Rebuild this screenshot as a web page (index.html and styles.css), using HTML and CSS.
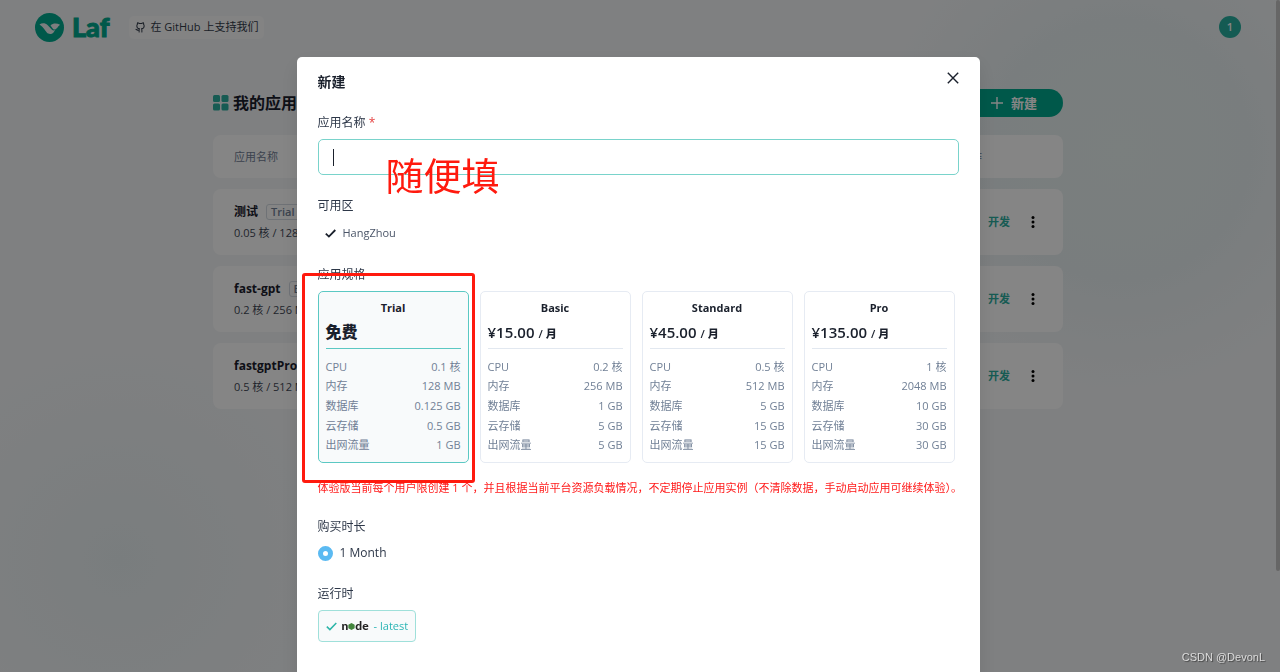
FILE: index.html
```
<!DOCTYPE html>
<html lang="zh-CN">
<head>
<meta charset="utf-8">
<meta name="viewport" content="width=device-width, initial-scale=1">
<title>Laf</title>
<link rel="stylesheet" href="styles.css">
</head>
<body>
<div class="page">
  <header class="topbar">
    <a class="logo" href="#" aria-label="Laf">
      <svg width="29" height="29" viewBox="0 0 29 29"><circle cx="14.500" cy="14.500" r="14.500" fill="#00a98e"/><path d="M4.500 11.500C7 9.700 10.500 10 12.500 12L17 16.800C18.200 18 19.500 17.600 20.500 16.500L18.500 19.500C16.500 21.600 13.500 21.500 11.800 19.600C9.500 17 8.500 14.200 4.500 11.500Z" fill="#eef1f3"/><path d="M15.500 12.500C18 9.900 22 10.200 25 11.700C23.500 12.800 22.800 14.300 21.500 15.600C20.300 16.900 18.900 16.900 17.900 15.700Z" fill="#eef1f3"/></svg>
      <span class="logo-word">Laf</span>
    </a>
    <a class="github" href="#">
      <svg width="11" height="11" viewBox="0 0 24 24" fill="none" stroke="#333c4a" stroke-width="2.200" stroke-linejoin="round" stroke-linecap="round"><path d="M9 22v-4c-4 1-5-1.500-7-2M9 22v-5c0-1 .3-1.700.9-2.200C6 14.300 4 12.500 4 8.500c0-1.500.5-2.800 1.400-3.800C5 3.500 5 2.500 5.500 1.500c1.500 0 3 1 4 1.800h5c1-.8 2.500-1.800 4-1.800.5 1 .5 2 .1 3.200.9 1 1.400 2.300 1.400 3.800 0 4-2 5.800-5.900 6.300.6.500.9 1.200.9 2.200v5"/></svg>
      <span>在 GitHub 上支持我们</span>
    </a>
    <button class="avatar" type="button">1</button>
  </header>

  <main class="apps">
    <div class="apps-head">
      <h1 class="apps-title">
        <svg width="16" height="16" viewBox="0 0 16 16" fill="#2cae9f"><rect width="7" height="7" rx="1.500"/><rect x="8.500" width="7" height="7" rx="1.500"/><rect y="8.500" width="7" height="7" rx="1.500"/><rect x="8.500" y="8.500" width="7" height="7" rx="1.500"/></svg>
        我的应用
      </h1>
      <button class="create" type="button">
        <svg width="12" height="12" viewBox="0 0 12 12" stroke="#fff" stroke-width="1.400"><path d="M6 0v12M0 6h12"/></svg>
        新建
      </button>
    </div>
    <div class="row row-head"><span>应用名称</span><span class="op">操作</span></div>
    <article class="row">
      <div class="app"><h2 class="app-name">测试 <span class="tag">Trial</span></h2><p class="app-spec">0.05 核 / 128 MB</p></div>
      <div class="actions"><button class="dev" type="button">开发</button><button class="more" type="button" aria-label="更多"><svg width="4" height="12" viewBox="0 0 4 12"><circle cx="2" cy="1.500" r="1.500"/><circle cx="2" cy="6" r="1.500"/><circle cx="2" cy="10.500" r="1.500"/></svg></button></div>
    </article>
    <article class="row">
      <div class="app"><h2 class="app-name">fast-gpt <span class="tag">Basic</span></h2><p class="app-spec">0.2 核 / 256 MB</p></div>
      <div class="actions"><button class="dev" type="button">开发</button><button class="more" type="button" aria-label="更多"><svg width="4" height="12" viewBox="0 0 4 12"><circle cx="2" cy="1.500" r="1.500"/><circle cx="2" cy="6" r="1.500"/><circle cx="2" cy="10.500" r="1.500"/></svg></button></div>
    </article>
    <article class="row">
      <div class="app"><h2 class="app-name">fastgptPro</h2><p class="app-spec">0.5 核 / 512 MB</p></div>
      <div class="actions"><button class="dev" type="button">开发</button><button class="more" type="button" aria-label="更多"><svg width="4" height="12" viewBox="0 0 4 12"><circle cx="2" cy="1.500" r="1.500"/><circle cx="2" cy="6" r="1.500"/><circle cx="2" cy="10.500" r="1.500"/></svg></button></div>
    </article>
  </main>
  <div class="scrollbar"></div>
</div>

<div class="overlay">
  <section class="modal" role="dialog" aria-modal="true" aria-labelledby="dlg-title">
    <header class="modal-head">
      <h2 class="modal-title" id="dlg-title">新建</h2>
      <button class="close" type="button" aria-label="关闭"><svg width="12" height="12" viewBox="0 0 12 12" stroke="#1a202c" stroke-width="1.400"><path d="M.8.8l10.400 10.400M11.200.8.8 11.200"/></svg></button>
    </header>
    <form class="form">
      <div class="field">
        <label class="label" for="app-name">应用名称 <span class="required">*</span></label>
        <div class="input-wrap">
          <input class="input" id="app-name" type="text">
          <span class="caret"></span>
          <span class="note-text">随便填</span>
        </div>
      </div>
      <div class="field">
        <span class="label">可用区</span>
        <div class="region">
          <svg width="11" height="9" viewBox="0 0 11 9" fill="none" stroke="#1a202c" stroke-width="1.800"><path d="M.8 4.600 3.900 7.600 10.300 1"/></svg>
          <span>HangZhou</span>
        </div>
      </div>
      <div class="field">
        <span class="label">应用规格</span>
        <div class="plans">
          <label class="plan plan-on">
            <input class="hidden-radio" type="radio" name="plan" checked>
            <span class="plan-name">Trial</span>
            <span class="price"><b>免费</b></span>
            <span class="specs">
              <span class="spec"><span>CPU</span><span>0.1 核</span></span>
              <span class="spec"><span>内存</span><span>128 MB</span></span>
              <span class="spec"><span>数据库</span><span>0.125 GB</span></span>
              <span class="spec"><span>云存储</span><span>0.5 GB</span></span>
              <span class="spec"><span>出网流量</span><span>1 GB</span></span>
            </span>
            <span class="mark"></span>
          </label>
          <label class="plan">
            <input class="hidden-radio" type="radio" name="plan">
            <span class="plan-name">Basic</span>
            <span class="price">¥15.00 <small class="per">/ <b>月</b></small></span>
            <span class="specs">
              <span class="spec"><span>CPU</span><span>0.2 核</span></span>
              <span class="spec"><span>内存</span><span>256 MB</span></span>
              <span class="spec"><span>数据库</span><span>1 GB</span></span>
              <span class="spec"><span>云存储</span><span>5 GB</span></span>
              <span class="spec"><span>出网流量</span><span>5 GB</span></span>
            </span>
          </label>
          <label class="plan">
            <input class="hidden-radio" type="radio" name="plan">
            <span class="plan-name">Standard</span>
            <span class="price">¥45.00 <small class="per">/ <b>月</b></small></span>
            <span class="specs">
              <span class="spec"><span>CPU</span><span>0.5 核</span></span>
              <span class="spec"><span>内存</span><span>512 MB</span></span>
              <span class="spec"><span>数据库</span><span>5 GB</span></span>
              <span class="spec"><span>云存储</span><span>15 GB</span></span>
              <span class="spec"><span>出网流量</span><span>15 GB</span></span>
            </span>
          </label>
          <label class="plan">
            <input class="hidden-radio" type="radio" name="plan">
            <span class="plan-name">Pro</span>
            <span class="price">¥135.00 <small class="per">/ <b>月</b></small></span>
            <span class="specs">
              <span class="spec"><span>CPU</span><span>1 核</span></span>
              <span class="spec"><span>内存</span><span>2048 MB</span></span>
              <span class="spec"><span>数据库</span><span>10 GB</span></span>
              <span class="spec"><span>云存储</span><span>30 GB</span></span>
              <span class="spec"><span>出网流量</span><span>30 GB</span></span>
            </span>
          </label>
        </div>
        <p class="warning">体验版当前每个用户限创建 1 个，并且根据当前平台资源负载情况，不定期停止应用实例（不清除数据，手动启动应用可继续体验）。</p>
      </div>
      <div class="field">
        <span class="label">购买时长</span>
        <label class="duration"><input class="radio" type="radio" name="duration" checked><span>1 Month</span></label>
      </div>
      <div class="field">
        <span class="label">运行时</span>
        <button class="runtime" type="button">
          <svg width="11" height="9" viewBox="0 0 11 9" fill="none" stroke="#2cb5a8" stroke-width="1.500"><path d="M.8 4.600 3.900 7.600 10.300 1"/></svg>
          <span class="node">n<svg width="7" height="7" viewBox="0 0 14 14" fill="#43853d"><path d="M7 0l6.300 3.500v7L7 14 .7 10.500v-7z"/></svg>de</span>
          <span>- latest</span>
        </button>
      </div>
    </form>
  </section>
  <span class="watermark">CSDN @DevonL</span>
</div>
</body>
</html>
```
FILE: styles.css
```
* { box-sizing: border-box; }
body, h1, h2, p { margin: 0; }
body {
  height: 100vh;
  overflow: hidden;
  font: 12px/20px "Open Sans", "Noto Sans CJK SC", sans-serif;
  color: #1a202c;
}
button, input { font: inherit; color: inherit; }
button { border: 0; padding: 0; background: none; }
a { color: inherit; text-decoration: none; }
svg { display: block; flex: none; }

.page {
  position: relative;
  min-height: 100vh;
  padding-right: 4px;
  background:
    radial-gradient(circle at 1120px 150px, #eaf3f1 0, #e9f0f2 130px, rgba(238, 242, 245, 0) 250px),
    radial-gradient(circle at 120px 560px, #e9f0f2 0, rgba(238, 242, 245, 0) 230px),
    #f4f6f8;
}
.scrollbar {
  position: absolute;
  top: 0;
  right: 0;
  width: 4px;
  height: 571px;
  border-radius: 2px;
  background: #c4c4c4;
}

.topbar {
  display: flex;
  align-items: center;
  gap: 20px;
  height: 54px;
  padding: 0 35px;
}
.logo { display: flex; align-items: center; gap: 8px; }
.logo-word {
  font: 900 27px/28px Lato, sans-serif;
  color: #00a98e;
  -webkit-text-stroke: 1px #00a98e;
}
.github {
  display: flex;
  align-items: center;
  gap: 4px;
  height: 23px;
  padding: 0 6px;
  border-radius: 5px;
  background: #fbfbfc;
  font-size: 11px;
  color: #333c4a;
}
.avatar {
  width: 22px;
  height: 22px;
  margin-left: auto;
  border-radius: 50%;
  background: #27ae9f;
  font-size: 11px;
  font-weight: 600;
  color: #fff;
}

.apps {
  display: flex;
  flex-direction: column;
  gap: 11px;
  width: 67%;
  max-width: 850px;
  margin: 0 auto;
  padding-top: 35px;
}
.apps-head {
  display: flex;
  align-items: center;
  justify-content: space-between;
  margin-bottom: 7px;
}
.apps-title { display: flex; align-items: center; gap: 4px; font-size: 16px; line-height: 28px; }
.create {
  display: flex;
  align-items: center;
  gap: 8px;
  height: 28px;
  padding: 0 26px 0 28px;
  border-radius: 14px;
  background: #00a98e;
  font-size: 13px;
  font-weight: 700;
  color: #fff;
}
.row {
  display: flex;
  align-items: center;
  justify-content: space-between;
  height: 66px;
  padding: 0 21px;
  border-radius: 8px;
  background: #fff;
}
.row-head { height: 43px; font-size: 11px; color: #718096; }
.op { width: 82px; }
.app-name { display: flex; align-items: center; gap: 8px; font-size: 12px; line-height: 22px; }
.tag {
  padding: 0 4px;
  border: 1px solid #d5dbe3;
  border-radius: 3px;
  font-size: 11px;
  font-weight: 600;
  line-height: 14px;
  color: #718096;
}
.app-spec { font-size: 11px; color: #3f4856; }
.actions { display: flex; align-items: center; gap: 21px; padding-right: 7px; }
.dev {
  padding-left: 8px;
  border-left: 1px solid #9fd8d2;
  font-size: 11px;
  font-weight: 700;
  line-height: 16px;
  color: #2cae9f;
}

.overlay {
  position: fixed;
  inset: 0;
  padding: 57px 4px 0 0;
  overflow: hidden;
  background: rgba(0, 0, 0, .48);
}
.modal {
  width: 683px;
  max-width: 100%;
  min-height: 100vh;
  margin: 0 auto;
  padding: 15px 21px 21px;
  border-radius: 5px;
  background: #fff;
  box-shadow: 0 8px 20px rgba(0, 0, 0, .1);
}
.modal-head { display: flex; justify-content: space-between; margin-bottom: 20px; }
.modal-title { font-size: 14px; line-height: 20px; }
.close { width: 12px; height: 12px; }
.form { display: flex; flex-direction: column; gap: 20px; }
.field { display: flex; flex-direction: column; align-items: flex-start; gap: 5px; }
.label { font-size: 12px; line-height: 22px; color: #2d3748; }
.required { color: #e53e3e; }

.input-wrap { position: relative; width: 100%; }
.input {
  display: block;
  width: 100%;
  height: 36px;
  padding: 0 14px;
  border: 1px solid #79d3cb;
  border-radius: 5px;
  outline: 0;
  background: #fff;
}
.caret { position: absolute; left: 15px; top: 10px; width: 1px; height: 17px; background: #1a202c; }
.note-text {
  position: absolute;
  left: 68px;
  top: 12px;
  font-size: 38px;
  line-height: 48px;
  color: #ff1a0e;
}
.region {
  display: flex;
  align-items: center;
  gap: 7px;
  padding: 1px 7px;
  font-size: 11px;
  color: #4a5568;
}

.plans {
  display: grid;
  grid-template-columns: repeat(4, 1fr);
  gap: 11px;
  width: 100%;
  padding-right: 4px;
}
.plan {
  position: relative;
  display: flex;
  flex-direction: column;
  padding: 7px;
  border: 1px solid #e6ebf3;
  border-radius: 5px;
}
.plan-on { border-color: #5bc8c3; background: #f8fafb; }
.hidden-radio { position: absolute; opacity: 0; pointer-events: none; }
.plan-name { font-size: 11px; font-weight: 700; line-height: 18px; text-align: center; }
.price {
  display: flex;
  align-items: baseline;
  gap: 4px;
  height: 32px;
  margin-bottom: 8px;
  border-bottom: 1px solid #e2e8f0;
  font-size: 15px;
  font-weight: 600;
  line-height: 30px;
}
.price > b { font-size: 16px; }
.plan-on .price { border-color: #5bc8c3; }
.per { font-size: 11px; line-height: 20px; }
.specs { display: grid; grid-auto-rows: 1fr; height: 98px; }
.spec {
  display: flex;
  align-items: center;
  justify-content: space-between;
  font-size: 11px;
  line-height: 18px;
  color: #718096;
}
.mark {
  position: absolute;
  inset: -19px -7px -21px -17px;
  border: 3px solid #ff1a0e;
  border-radius: 3px;
  pointer-events: none;
}
.warning {
  margin-top: 12px;
  font-size: 11px;
  line-height: 16px;
  white-space: nowrap;
  color: #ff1a1a;
}

.duration { display: flex; align-items: center; gap: 7px; color: #2d3748; }
.radio {
  appearance: none;
  width: 15px;
  height: 15px;
  margin: 0;
  border: 5px solid #5bbaf2;
  border-radius: 50%;
  background: #fff;
}
.runtime {
  display: flex;
  align-items: center;
  gap: 5px;
  height: 32px;
  padding: 0 7px;
  border: 1px solid #9fe0da;
  border-radius: 4px;
  background: #f8fafb;
  font-size: 11px;
  color: #2cb5b5;
}
.node {
  display: flex;
  align-items: baseline;
  font: 900 12px/16px Lato, sans-serif;
  color: #222;
}

.watermark {
  position: absolute;
  right: 15px;
  bottom: 7px;
  font: 11px/16px "Liberation Sans", sans-serif;
  color: #dcdcdc;
  text-shadow: 1px 1px 1px #444;
}
```
